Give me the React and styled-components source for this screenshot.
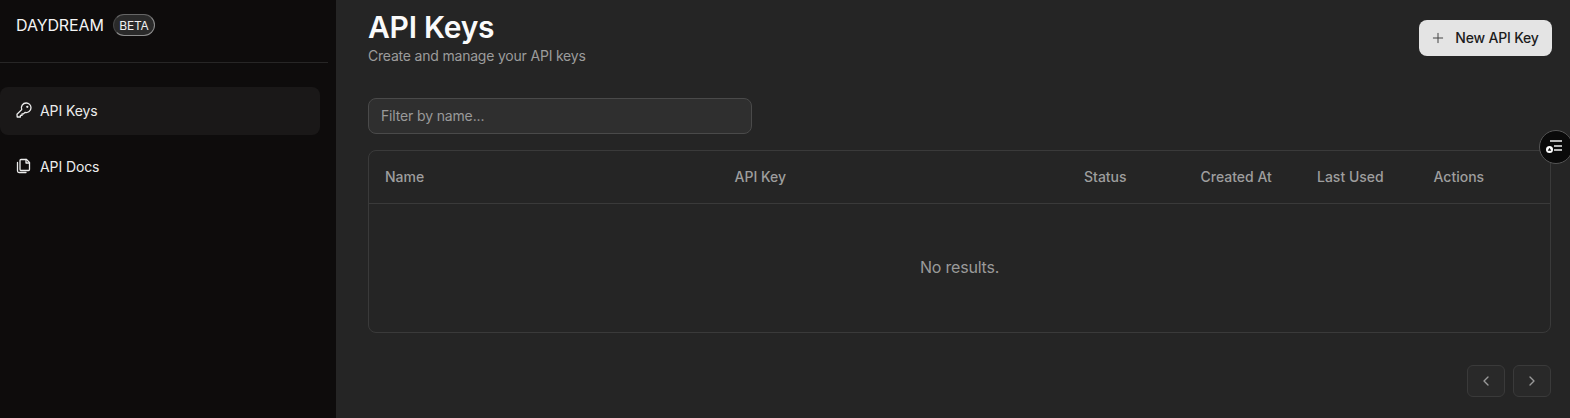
import React from "react";
import styled, { createGlobalStyle } from "styled-components";
import { Plus, ChevronLeft, ChevronRight } from "lucide-react";

const Global = createGlobalStyle`
  html, body { margin: 0; padding: 0; height: 418px; overflow: hidden; background: #252525; }
  * { box-sizing: border-box; }
  body { font-family: Inter, "Liberation Sans", sans-serif; }
`;
const Page = styled.div`
  display: flex; width: 1570px; height: 418px; overflow: hidden; position: relative; background: #252525;
`;
const Sidebar = styled.aside`
  width: 336px; flex: none; background: #0e0c0c; display: flex; flex-direction: column; padding-right: 8px;
`;
const Brand = styled.div`
  height: 63px; padding: 0 16px 12px; display: flex; align-items: center; gap: 9px;
  border-bottom: 1px solid #272626; color: #f4f4f4;
`;
const BrandName = styled.span`font-size: 16px; font-weight: 400; letter-spacing: -0.1px; line-height: 20px;`;
const Beta = styled.span`
  height: 22px; width: 42px; border-radius: 11px; background: #2a2a2a; border: 1px solid #8c8c8c; border-left-color: #444; border-top-color: #666;
  font-size: 12px; letter-spacing: -0.2px; display: flex; align-items: center; justify-content: center; color: #f0f0f0;
`;
const Nav = styled.nav`display: flex; flex-direction: column; gap: 8px; padding: 24px 8px 0 0;`;
const NavItem = styled.a`
  height: 48px; border-radius: 8px; padding: 0 16px 2px; display: flex; align-items: center; gap: 8px;
  font-size: 14px; font-weight: 400; letter-spacing: -0.1px; color: #ececec; background: ${p => p.$active ? "#1a1818" : "transparent"};
`;
const Main = styled.main`flex: 1; padding: 12px 18px 0 32px; display: flex; flex-direction: column;`;
const Header = styled.header`display: flex; justify-content: space-between; align-items: flex-start; height: 86px;`;
const Titles = styled.div`display: flex; flex-direction: column;`;
const Title = styled.h1`margin: 0; font-size: 30px; font-weight: 600; line-height: 30px; color: #fafafa; letter-spacing: -0.25px;`;
const Subtitle = styled.p`margin: 4px 0 0; font-size: 14px; line-height: 20px; color: #9c9c9c; letter-spacing: -0.2px;`;
const NewButton = styled.button`
  margin-top: 8px; height: 36px; width: 133px; border: 0; border-radius: 8px; background: #e4e4e4; color: #1c1c1c;
  display: flex; align-items: center; justify-content: center; gap: 9px; font: 500 14px Inter, sans-serif; letter-spacing: -0.2px; padding: 0 2px 2px 0;
  svg { width: 16px; height: 16px; stroke-width: 1.5; color: #444; margin-top: 2px; }
`;
const Filter = styled.input`
  width: 384px; height: 36px; border-radius: 8px; border: 1px solid #4a4a4a; background: #2f2f2f; padding: 0 12px 2px;
  font: 400 14px Inter, sans-serif; letter-spacing: -0.15px; color: #eee; outline: none;
  &::placeholder { color: #9a9a9a; opacity: 1; }
`;
const Table = styled.div`margin-top: 16px; width: 1183px; height: 183px; border: 1px solid #3a3a3a; border-radius: 8px; display: flex; flex-direction: column;`;
const HeadRow = styled.div`
  height: 53px; flex: none; display: grid; grid-template-columns: 349.5px 349.5px 116.5px 116.5px 116.5px 1fr;
  border-bottom: 1px solid #3a3a3a; align-items: center; padding-bottom: 2px;
`;
const HeadCell = styled.div`padding-left: 16px; font-size: 14px; font-weight: 450; color: #9e9e9e;`;
const Empty = styled.div`flex: 1; display: flex; align-items: center; justify-content: center; font-size: 16px; color: #9a9a9a; letter-spacing: -0.2px; padding-bottom: 2px;`;
const Pager = styled.div`display: flex; justify-content: flex-end; gap: 8px; margin: 32px 1px 0 0;`;
const PageBtn = styled.button`
  width: 38px; height: 32px; border-radius: 6px; border: 1px solid #3a3a3a; background: #292929; color: #9a9a9a; padding: 0;
  display: flex; align-items: center; justify-content: center;
  svg { width: 16px; height: 16px; }
`;
const Widget = styled.div`
  position: absolute; left: 1539px; top: 130px; width: 34px; height: 34px; border-radius: 50%; background: #0a0a0a; border: 1px solid #555;
  display: flex; align-items: center; padding-left: 6px;
`;

const KeyIcon = () => (
  <svg width="16" height="16" viewBox="0 0 16 16" fill="none" stroke="currentColor" strokeWidth="1.3" strokeLinejoin="round" strokeLinecap="round">
    <path d="M10.2 1a4.8 4.8 0 0 1 4.8 4.8 4.8 4.8 0 0 1-6 4.6L7.6 11.8H6v1.6H4.400v1.6H1.200L1 12.300l4.700-4.700A4.800 4.800 0 0 1 10.200 1z" />
    <circle cx="11.300" cy="4.800" r="0.500" fill="currentColor" />
  </svg>
);
const DocsIcon = () => (
  <svg width="16" height="16" viewBox="0 0 16 16" fill="none" stroke="currentColor" strokeWidth="1.3" strokeLinejoin="round" strokeLinecap="round">
    <path d="M5 1.500h5.500L13.500 4.500v7a1 1 0 0 1-1 1H5a1 1 0 0 1-1-1v-9a1 1 0 0 1 1-1z" />
    <path d="M10 1.500v3.500h3.500" />
    <path d="M1.500 4.500v8.500a1.500 1.500 0 0 0 1.500 1.500h7" />
  </svg>
);

export default function App() {
  return (
    <Page>
      <Global />
      <Sidebar>
        <Brand><BrandName>DAYDREAM</BrandName><Beta>BETA</Beta></Brand>
        <Nav>
          <NavItem $active><KeyIcon />API Keys</NavItem>
          <NavItem><DocsIcon />API Docs</NavItem>
        </Nav>
      </Sidebar>
      <Main>
        <Header>
          <Titles><Title>API Keys</Title><Subtitle>Create and manage your API keys</Subtitle></Titles>
          <NewButton><Plus />New API Key</NewButton>
        </Header>
        <Filter placeholder="Filter by name..." />
        <Table>
          <HeadRow>
            {["Name", "API Key", "Status", "Created At", "Last Used", "Actions"].map(h => <HeadCell key={h}>{h}</HeadCell>)}
          </HeadRow>
          <Empty>No results.</Empty>
        </Table>
        <Pager>
          <PageBtn><ChevronLeft /></PageBtn>
          <PageBtn><ChevronRight /></PageBtn>
        </Pager>
      </Main>
      <Widget>
        <svg width="18" height="14" viewBox="0 0 18 14" fill="none">
          <path d="M4 1h12M8 6h8M8 10h8" stroke="#eee" strokeWidth="1.400" />
          <circle cx="3.500" cy="9.500" r="3.500" fill="#fff" />
          <path d="M3.500 7.800l1.800 3H1.700z" fill="#111" />
        </svg>
      </Widget>
    </Page>
  );
}
